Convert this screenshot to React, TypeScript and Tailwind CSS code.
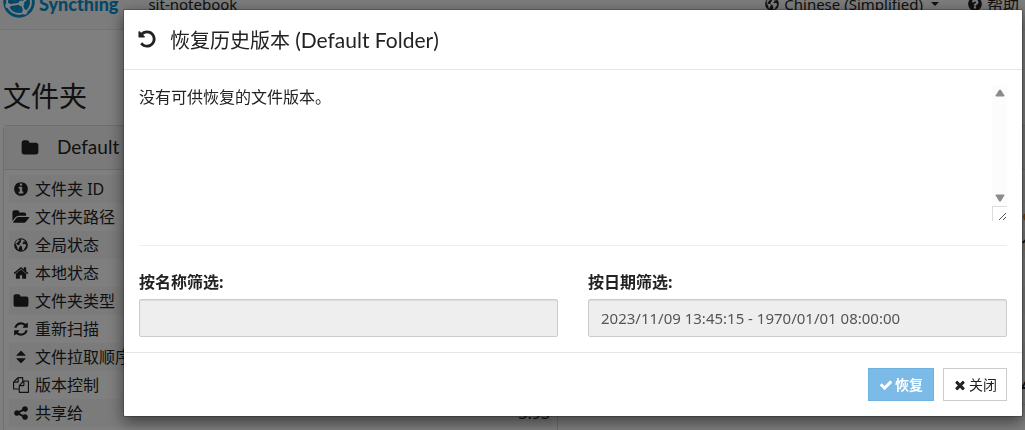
import { useState, type ReactNode } from 'react'

const CIRCLE =
  'm640 416q0 209-103 385.5t-279.5 279.5-385.5 103-385.5-103-279.5-279.5-103-385.5 103-385.5 279.5-279.5 385.5-103 385.5 103 279.5 279.5 103 385.5z'

const ICONS = {
  undo: 'M1664 896q0 156-61 298t-164 245-245 164-298 61q-172 0-327-72.5t-264-204.5q-7-10-6.5-22.5t8.5-20.5l137-138q10-9 25-9 16 2 23 12 73 95 179 147t225 52q104 0 198.5-40.5t163.5-109.5 109.5-163.5 40.5-198.5-40.5-198.5-109.5-163.5-163.5-109.5-198.5-40.5q-98 0-188 35.5t-160 101.5l137 138q31 30 14 69-17 40-59 40h-448q-26 0-45-19t-19-45v-448q0-42 40-59 39-17 69 14l130 129q107-101 244.5-156.5t284.5-55.5q156 0 298 61t245 164 164 245 61 298z',
  folder:
    'M1728 608v704q0 92-66 158t-158 66h-1216q-92 0-158-66t-66-158v-960q0-92 66-158t158-66h320q92 0 158 66t66 158v32h672q92 0 158 66t66 158z',
  folderOpen:
    'M1815 952q0 31-31 66l-336 396q-43 51-120.5 86.5t-143.5 35.5h-1088q-34 0-60.5-13t-26.5-43q0-31 31-66l336-396q43-51 120.5-86.5t143.5-35.5h1088q34 0 60.5 13t26.5 43zm-343-344v160h-832q-94 0-197 47.5t-164 119.5l-337 396-5 6q0-4-.5-12.5t-.5-12.5v-960q0-92 66-158t158-66h320q92 0 158 66t66 158v32h544q92 0 158 66t66 158z',
  info: `M1152 1376v-160q0-14-9-23t-23-9h-96v-512q0-14-9-23t-23-9h-320q-14 0-23 9t-9 23v160q0 14 9 23t23 9h96v320h-96q-14 0-23 9t-9 23v160q0 14 9 23t23 9h448q14 0 23-9t9-23zm-128-896v-160q0-14-9-23t-23-9h-192q-14 0-23 9t-9 23v160q0 14 9 23t23 9h192q14 0 23-9t9-23z${CIRCLE}`,
  question: `M1024 1376v-192q0-14-9-23t-23-9h-192q-14 0-23 9t-9 23v192q0 14 9 23t23 9h192q14 0 23-9t9-23zm256-672q0-88-55.5-163t-138.5-116-170-41q-243 0-371 213-15 24 8 42l132 100q7 6 19 6 16 0 25-12 53-68 86-92 34-24 86-24 48 0 85.5 26t37.5 59q0 38-20 61t-68 45q-63 28-115.5 86.5t-52.5 125.5v36q0 14 9 23t23 9h192q14 0 23-9t9-23q0-19 21.5-49.5t54.5-49.5q32-18 49-28.5t46-35 44.5-48 28-60.500 12.5-81zm384 192q0 209-103 385.500t-279.5 279.5-385.5 103-385.5-103-279.5-279.5-103-385.5 103-385.5 279.5-279.5 385.5-103 385.5 103 279.5 279.5 103 385.5z`,
  // ocean cut out of the disc, continents left solid
  globe:
    'M896 128a768 768 0 1 0 0 1536a768 768 0 1 0 0-1536zM700 262l-60 80 90 40-50 100-110 20-60 90 30 70-90-20-80 60 40 120 110 60 150 20 110 100-30 130-90 60-30 170-70 60-70-160-10-180-110-130-30-130-76-90a640 640 0 0 1 436-500zM960 250a640 640 0 0 1 440 240l-90 30-60-60-90 50 10 100-110 90 30 90 110 10 90-50 120 70 60 130-60 180-110 110-60 170-130 90-90-80 20-160-60-100 10-120-100-60-110-10-70-110 30-120 100-90 20-120 70-70-70-80z',
  home: 'M1472 992v480q0 26-19 45t-45 19h-384v-384h-256v384h-384q-26 0-45-19t-19-45v-480q0-1 .5-3t.5-3l575-474 575 474q1 2 1 6zm223-69l-62 74q-8 9-21 11h-3q-13 0-21-7l-692-577-692 577q-12 8-24 7-13-2-21-11l-62-74q-8-10-7-23.5t11-21.5l719-599q32-26 76-26t76 26l244 204v-195q0-14 9-23t23-9h192q14 0 23 9t9 23v408l219 182q10 8 11 21.5t-7 23.5z',
  refresh:
    'M1639 1056q0 5-1 7-64 268-268 434.5t-478 166.5q-146 0-282.5-55t-243.5-157l-129 129q-19 19-45 19t-45-19-19-45v-448q0-26 19-45t45-19h448q26 0 45 19t19 45-19 45l-137 137q71 66 161 102t187 36q134 0 250-65t186-179q11-17 53-117 8-23 30-23h192q13 0 22.5 9.5t9.5 22.5zm25-800v448q0 26-19 45t-45 19h-448q-26 0-45-19t-19-45 19-45l138-138q-148-137-349-137-134 0-250 65t-186 179q-11 17-53 117-8 23-30 23h-199q-13 0-22.5-9.5t-9.5-22.5v-7q65-268 270-434.5t480-166.5q146 0 284 55.5t245 156.5l130-129q19-19 45-19t45 19 19 45z',
  sort: 'M1408 1088q0 26-19 45l-448 448q-19 19-45 19t-45-19l-448-448q-19-19-19-45t19-45 45-19h896q26 0 45 19t19 45zm0-384q0 26-19 45t-45 19h-896q-26 0-45-19t-19-45 19-45l448-448q19-19 45-19t45 19l448 448q19 19 19 45z',
  files:
    'M1696 384q40 0 68 28t28 68v1216q0 40-28 68t-68 28h-960q-40 0-68-28t-28-68v-288h-544q-40 0-68-28t-28-68v-672q0-40 20-88t48-76l408-408q28-28 76-48t88-20h416q40 0 68 28t28 68v328q68-40 128-40h416zm-544 213l-299 299h299v-299zm-640-384l-299 299h299v-299zm196 647l316-316v-416h-384v416q0 40-28 68t-68 28h-416v640h512v-256q0-40 20-88t48-76zm956 804v-1152h-384v416q0 40-28 68t-68 28h-416v640h896z',
  share:
    'M1344 1024q133 0 226.5 93.5t93.5 226.5-93.5 226.5-226.5 93.5-226.5-93.5-93.5-226.5q0-12 2-34l-360-180q-92 86-218 86-133 0-226.5-93.5t-93.5-226.5 93.5-226.5 226.5-93.5q126 0 218 86l360-180q-2-22-2-34 0-133 93.5-226.5t226.5-93.5 226.5 93.5 93.5 226.5-93.5 226.5-226.5 93.5q-126 0-218-86l-360 180q2 22 2 34t-2 34l360 180q92-86 218-86z',
  check:
    'M1671 566q0 40-28 68l-724 724-136 136q-28 28-68 28t-68-28l-136-136-362-362q-28-28-28-68t28-68l136-136q28-28 68-28t68 28l294 295 656-657q28-28 68-28t68 28l136 136q28 28 28 68z',
  times:
    'M1490 1322q0 40-28 68l-136 136q-28 28-68 28t-68-28l-294-294-294 294q-28 28-68 28t-68-28l-136-136q-28-28-28-68t28-68l294-294-294-294q-28-28-28-68t28-68l136-136q28-28 68-28t68 28l294 294 294-294q28-28 68-28t68 28l136 136q28 28 28 68t-28 68l-294 294 294 294q28 28 28 68z',
}

type IconName = keyof typeof ICONS

function Icon({ name, className = 'size-4' }: { name: IconName; className?: string }) {
  return (
    <svg
      viewBox="0 0 1792 1792"
      className={`shrink-0 overflow-visible ${className}`}
      fill="currentColor"
      fillRule={name === 'globe' ? 'evenodd' : 'nonzero'}
      aria-hidden="true"
    >
      <path d={ICONS[name]} />
    </svg>
  )
}

function Logo() {
  return (
    <svg viewBox="0 0 118 118" className="size-8 shrink-0" aria-hidden="true">
      <circle cx="59" cy="59" r="58" fill="#0891d1" />
      <circle cx="59" cy="59" r="44" fill="none" stroke="#fff" strokeWidth="7" />
      <g stroke="#fff" strokeWidth="7" fill="#fff">
        <path d="M68 64L98 39M68 64L80 96M68 64L18 72" />
        <circle cx="68" cy="64" r="7" />
        <circle cx="98" cy="39" r="6" />
        <circle cx="80" cy="96" r="6" />
        <circle cx="18" cy="72" r="6" />
      </g>
    </svg>
  )
}

interface FolderRow {
  icon: IconName
  label: string
  value?: string
}

const folderRows: FolderRow[] = [
  { icon: 'info', label: '文件夹 ID' },
  { icon: 'folderOpen', label: '文件夹路径' },
  { icon: 'globe', label: '全局状态' },
  { icon: 'home', label: '本地状态' },
  { icon: 'folder', label: '文件夹类型' },
  { icon: 'refresh', label: '重新扫描' },
  { icon: 'sort', label: '文件拉取顺序' },
  { icon: 'files', label: '版本控制' },
  { icon: 'share', label: '共享给', value: '3.93' },
]

const deviceValues = ['', '', '1', '', '', '', '', '4']

function Panel({ title, children }: { title?: ReactNode; children: ReactNode }) {
  return (
    <section className="rounded-sm border border-[#ddd] bg-white">
      <div className="flex h-11 items-center gap-[18px] border-b border-[#ddd] bg-[#f5f5f5] px-[17px]">{title}</div>
      <div className="p-[5px]">{children}</div>
    </section>
  )
}

function Navbar() {
  return (
    <nav className="flex h-[30px] items-end justify-between overflow-hidden border-b border-[#e7e7e7] bg-[#f8f8f8] pr-[6px] pl-[3px] leading-5">
      <div className="flex items-end">
        <a href="#" className="flex items-end gap-1 pb-[11px] font-[Lato,sans-serif] text-lg leading-5 font-black text-[#0891d1]">
          <Logo />
          <span className="pb-1">Syncthing</span>
        </a>
        <span className="pb-[15px] pl-[30px] text-[15px] leading-5">sit-notebook</span>
      </div>
      <div className="flex gap-7 pb-[15px] text-[15px] leading-5">
        <a href="#" className="flex items-center gap-1">
          <Icon name="globe" />
          Chinese (Simplified)
          <span className="ml-1 border-x-4 border-t-4 border-x-transparent" />
        </a>
        <a href="#" className="flex items-center gap-1 text-base leading-5">
          <Icon name="question" />
          帮助
        </a>
      </div>
    </nav>
  )
}

function Background() {
  return (
    <div className="h-screen overflow-hidden">
      <Navbar />
      <main className="pl-[3px]">
        <h3 className="pt-[46px] text-[28px] leading-10">文件夹</h3>
        <div className="mt-[9px] flex gap-[30px]">
          <div className="w-[555px] shrink-0">
            <Panel
              title={
                <>
                  <Icon name="folder" className="size-[18px]" />
                  <span className="font-[Lato,sans-serif] text-[19px]">Default Folder</span>
                </>
              }
            >
              <table className="w-full">
                <tbody>
                  {folderRows.map((row) => (
                    <tr key={row.label} className="h-7 odd:bg-[#f7f7f7]">
                      <th className="p-0 pl-0.5 text-left font-normal">
                        <span className="flex items-center gap-1 leading-5">
                          <span className="flex w-5 justify-center">
                            <Icon name={row.icon} />
                          </span>
                          {row.label}
                        </span>
                      </th>
                      <td className="p-0 pr-0.5 text-right leading-5">{row.value}</td>
                    </tr>
                  ))}
                </tbody>
              </table>
            </Panel>
          </div>
          <div className="w-[555px] shrink-0">
            <Panel>
              {deviceValues.map((value, i) => (
                <div key={i} className="flex h-7 items-center pl-[427px] font-bold odd:bg-[#f7f7f7]">
                  {i === 1 ? <span className="ml-0.5 size-2 rounded-full bg-[#e8871e]" /> : value}
                </div>
              ))}
            </Panel>
          </div>
        </div>
      </main>
    </div>
  )
}

function VersionList() {
  return (
    <div className="flex h-[136px] justify-between">
      <p className="leading-6">没有可供恢复的文件版本。</p>
      <div className="flex w-[15px] flex-col">
        <div className="flex flex-1 flex-col items-center justify-between bg-[#fcfcfc] pt-1 pb-1 text-[#8b8b8b]">
          <svg viewBox="0 0 10 8" className="h-2 w-[10px]" fill="currentColor" aria-hidden="true">
            <path d="M5 .5Q5.600 .5 6 1L9.300 6.200Q9.800 7.500 8.600 7.500H1.400Q.2 7.500 .7 6.200L4 1Q4.400 .5 5 .5z" />
          </svg>
          <svg viewBox="0 0 10 8" className="h-2 w-[10px]" fill="currentColor" aria-hidden="true">
            <path d="M5 7.500Q4.400 7.500 4 7L.7 1.800Q.2 .5 1.400 .5H8.600Q9.800 .5 9.300 1.800L6 7Q5.600 7.500 5 7.500z" />
          </svg>
        </div>
        <div className="flex h-[15px] items-end justify-end border-t border-l border-[#dcdcdc]">
          <svg viewBox="0 0 9 9" className="size-[9px]" stroke="#555" fill="none" aria-hidden="true">
            <path d="M1 8L8 1M5 8L8 5" />
          </svg>
        </div>
      </div>
    </div>
  )
}

interface FieldProps {
  id: string
  label: string
  value: string
}

function Field({ id, label, value }: FieldProps) {
  return (
    <div>
      <label htmlFor={id} className="mb-[5px] block leading-6 font-bold">
        {label}
      </label>
      <input
        id={id}
        type="text"
        value={value}
        disabled
        className="block h-[38px] w-full rounded-xs border border-[#ccc] bg-[#eee] px-3 text-[15px] text-[#555] shadow-[inset_0_1px_1px_rgba(0,0,0,0.075)]"
      />
    </div>
  )
}

function RestoreDialog({ onClose }: { onClose: () => void }) {
  return (
    <div className="fixed inset-0 bg-black/50 pt-[9px] pr-0.5 pl-[123px]">
      <div
        role="dialog"
        aria-labelledby="restore-title"
        className="rounded-xs border border-black/20 bg-white bg-clip-padding shadow-[0_5px_15px_rgba(0,0,0,0.5)]"
      >
        <div className="flex h-[60px] items-center border-b border-[#e5e5e5] px-[13px]">
          <h4 id="restore-title" className="flex items-center gap-[13px] font-[Lato,'Noto_Sans_CJK_SC',sans-serif] text-xl">
            <Icon name="undo" className="size-5" />
            <span>
              恢复历史版本 <span className="text-[21px]">(Default Folder)</span>
            </span>
          </h4>
        </div>
        <div className="px-[15px] py-[15px]">
          <VersionList />
          <hr className="my-6 border-[#eee]" />
          <div className="grid grid-cols-2 gap-[30px]">
            <Field id="filter-name" label="按名称筛选:" value="" />
            <Field id="filter-date" label="按日期筛选:" value="2023/11/09 13:45:15 - 1970/01/01 08:00:00" />
          </div>
        </div>
        <div className="flex justify-end gap-[9px] border-t border-[#e5e5e5] p-[15px] pt-[15px] text-sm">
          <button
            type="button"
            disabled
            className="flex h-[33px] items-center gap-0.5 border border-[#6fb3e0] bg-[#7cbbe8] px-[10px] font-bold text-white"
          >
            <Icon name="check" className="size-[14px]" />
            恢复
          </button>
          <button
            type="button"
            onClick={onClose}
            className="flex h-[33px] items-center gap-0.5 border border-[#ccc] bg-white px-[9px]"
          >
            <Icon name="times" className="size-[14px]" />
            关闭
          </button>
        </div>
      </div>
    </div>
  )
}

export default function App() {
  const [open, setOpen] = useState(true)

  return (
    <div className="font-['Noto_Sans','Noto_Sans_CJK_SC',sans-serif] text-base text-[#222]">
      <Background />
      {open && <RestoreDialog onClose={() => setOpen(false)} />}
    </div>
  )
}
